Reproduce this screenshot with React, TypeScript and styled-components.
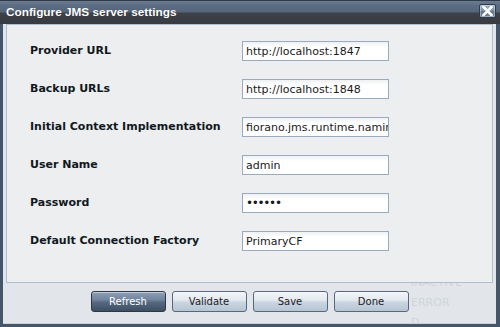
import React from "react";
import styled, { createGlobalStyle } from "styled-components";

const Global = createGlobalStyle`
  html, body { margin: 0; padding: 0; background: #ffffff; }
  * { box-sizing: border-box; }
`;

const Window = styled.div`
  width: 500px;
  height: 327px;
  display: flex;
  flex-direction: column;
  background: #45556a;
  overflow: hidden;
`;

const TitleBar = styled.div`
  height: 24px;
  flex: none;
  display: flex;
  align-items: center;
  justify-content: space-between;
  padding: 0 4px 0 6px;
  background: linear-gradient(
    #6b7c92 0%,
    #5c6d83 20%,
    #55657b 48%,
    #3d4148 52%,
    #383b41 100%
  );
  border-top: 1px solid #2f3a48;
`;

const Title = styled.span`
  font-family: "Liberation Sans", Arial, sans-serif;
  font-weight: bold;
  font-size: 11.8px;
  color: #ffffff;
  text-shadow: 0 0 1px rgba(0, 0, 0, 0.4);
  margin-top: -2px;
`;

const CloseButton = styled.div`
  width: 17px;
  height: 14px;
  margin-top: -4px;
  border: 1px solid #2e3b4b;
  border-radius: 2px;
  background: linear-gradient(#a2b2c5, #7c8ea5 50%, #62758d 55%, #6f829a);
  box-shadow: inset 0 0 0 1px rgba(255, 255, 255, 0.35);
  display: flex;
  align-items: center;
  justify-content: center;
`;

const Body = styled.div`
  flex: 1;
  display: flex;
  flex-direction: column;
  margin: 0 4px 3px 3px;
  background: #e2e5e9;
  border-bottom: 1px solid #c9d0d8;
  position: relative;
  overflow: hidden;
`;

const Panel = styled.div`
  height: 259px;
  margin: 0 3px 0 3px;
  background: #eceef0;
  border: 1px solid #aebfd1;
  padding: 7px 0 0 23px;
  position: relative;
  z-index: 1;
`;

const Form = styled.div`
  display: grid;
  grid-template-columns: 212px 147px;
  grid-auto-rows: 38px;
  align-items: center;
`;

const Label = styled.label`
  font-family: "DejaVu Sans", Verdana, sans-serif;
  font-weight: bold;
  font-size: 11px;
  color: #111820;
  margin-top: -2px;
`;

const Field = styled.input<{ $secret?: boolean }>`
  width: 147px;
  height: 20px;
  border: 1px solid #9aabbf;
  padding: 0 0 0 3px;
  margin: 0;
  background: linear-gradient(#eef0f2, #ffffff 5px, #ffffff);
  font-family: "DejaVu Sans", Verdana, sans-serif;
  font-size: ${(p) => (p.$secret ? "12px" : "11px")};
  letter-spacing: ${(p) => (p.$secret ? "-1.3px" : "0")};
  color: #1a1a1a;
  outline: none;
`;

const Footer = styled.div`
  flex: 1;
  display: flex;
  justify-content: center;
  align-items: flex-start;
  gap: 6px;
  padding-top: 8px;
  position: relative;
`;

const Button = styled.button<{ $primary?: boolean }>`
  width: 75px;
  height: 21px;
  padding: 0;
  border-radius: 3px;
  border: 1px solid ${(p) => (p.$primary ? "#2c3847" : "#56687f")};
  background: ${(p) =>
    p.$primary
      ? "linear-gradient(#8d9eb3, #7386a0 40%, #55687f 55%, #3e4f63)"
      : "linear-gradient(#f4f6f9, #e3e9ef 42%, #c9d4df 56%, #b6c4d3)"};
  box-shadow: inset 0 1px 0 rgba(255, 255, 255, 0.5);
  font-family: "DejaVu Sans", Verdana, sans-serif;
  font-size: 10px;
  color: ${(p) => (p.$primary ? "#ffffff" : "#1b2026")};
  position: relative;
  z-index: 1;
`;

const Ghost = styled.div`
  position: absolute;
  left: 408px;
  top: -10px;
  display: flex;
  flex-direction: column;
  font-family: "DejaVu Sans", Verdana, sans-serif;
  font-size: 11px;
  line-height: 20px;
  color: #d0d5db;
  z-index: 0;
`;

const fields: { label: string; value: string; secret?: boolean }[] = [
  { label: "Provider URL", value: "http://localhost:1847" },
  { label: "Backup URLs", value: "http://localhost:1848" },
  {
    label: "Initial Context Implementation",
    value: "fiorano.jms.runtime.naming.FioranoInitialContextFactory",
  },
  { label: "User Name", value: "admin" },
  { label: "Password", value: "passwd", secret: true },
  { label: "Default Connection Factory", value: "PrimaryCF" },
];

export default function App() {
  return (
    <>
      <Global />
      <Window>
        <TitleBar>
          <Title>Configure JMS server settings</Title>
          <CloseButton>
            <svg width="11" height="10" viewBox="0 0 11 10">
              <path
                d="M1.5 1 L9.5 9 M9.5 1 L1.5 9"
                stroke="#ffffff"
                strokeWidth="2.6"
                strokeLinecap="square"
              />
            </svg>
          </CloseButton>
        </TitleBar>
        <Body>
          <Panel>
            <Form>
              {fields.map((f) => (
                <React.Fragment key={f.label}>
                  <Label>{f.label}</Label>
                  <Field
                    readOnly
                    type={f.secret ? "password" : "text"}
                    $secret={f.secret}
                    defaultValue={f.value}
                  />
                </React.Fragment>
              ))}
            </Form>
          </Panel>
          <Footer>
            <Ghost>
              <span>INACTIVE</span>
              <span>ERROR</span>
              <span>D</span>
            </Ghost>
            <Button $primary>Refresh</Button>
            <Button>Validate</Button>
            <Button>Save</Button>
            <Button>Done</Button>
          </Footer>
        </Body>
      </Window>
    </>
  );
}
